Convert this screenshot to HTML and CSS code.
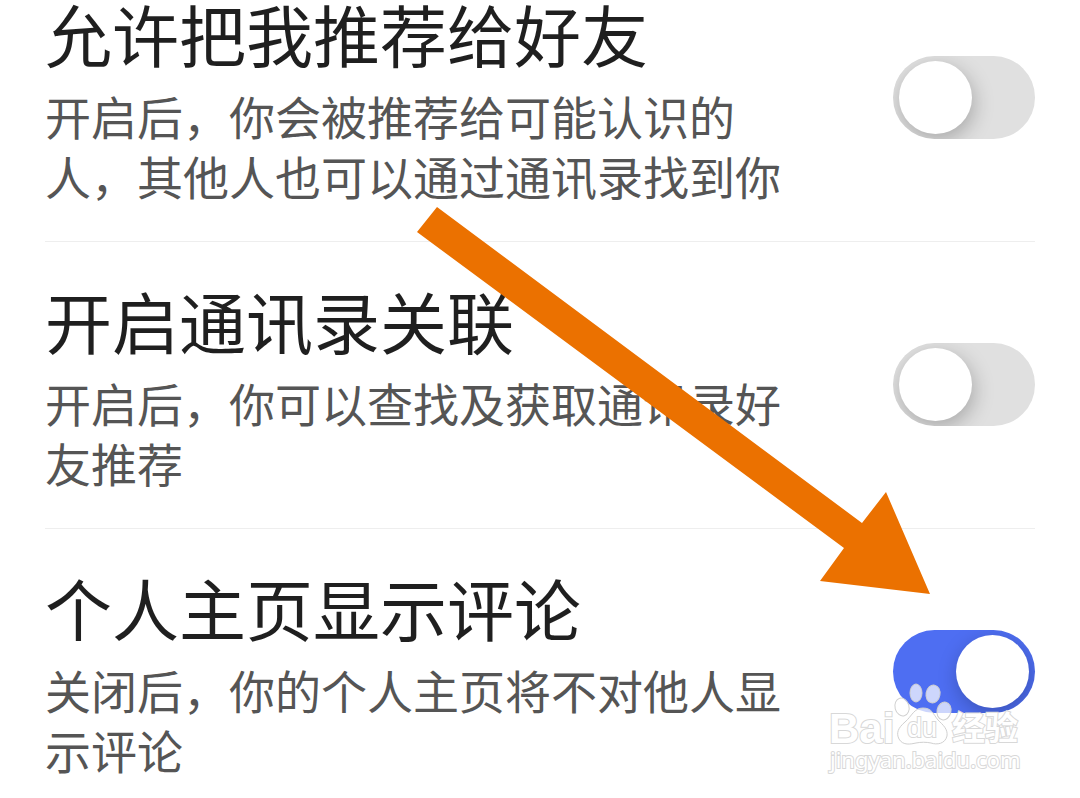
FILE: index.html
```html
<!DOCTYPE html>
<html lang="zh-CN">
<head>
    <meta charset="UTF-8">
    <meta name="viewport" content="width=device-width, initial-scale=1.0">
    <title>隐私设置</title>
    <link rel="stylesheet" href="styles.css">
</head>
<body>
    <main class="settings">
        <div class="item">
            <div class="text">
                <label class="title" for="recommend">允许把我推荐给好友</label>
                <p class="desc">开启后，你会被推荐给可能认识的人，其他人也可以通过通讯录找到你</p>
            </div>
            <input class="switch" type="checkbox" id="recommend">
        </div>
        <div class="item">
            <div class="text">
                <label class="title" for="contacts">开启通讯录关联</label>
                <p class="desc">开启后，你可以查找及获取通讯录好友推荐</p>
            </div>
            <input class="switch" type="checkbox" id="contacts">
        </div>
        <div class="item">
            <div class="text">
                <label class="title" for="comments">个人主页显示评论</label>
                <p class="desc">关闭后，你的个人主页将不对他人显示评论</p>
            </div>
            <input class="switch" type="checkbox" id="comments" checked>
        </div>
        <svg class="arrow" viewBox="0 0 514 388" aria-hidden="true">
            <path d="M20 0 L445 316 L469 285 L513 387 L403 374 L427 341 L0 25 Z"/>
        </svg>
        <svg class="watermark" viewBox="0 0 204 100">
            <text class="bai" x="4" y="63">Bai</text>
            <g class="paw">
                <ellipse cx="91" cy="13" rx="6" ry="9"/>
                <ellipse cx="108" cy="14" rx="7" ry="9" transform="rotate(10 108 14)"/>
                <ellipse cx="77" cy="27" rx="7" ry="9" transform="rotate(-15 77 27)"/>
                <ellipse cx="119" cy="31" rx="7" ry="9" transform="rotate(12 119 31)"/>
                <path d="M98 28 C89 28 87 36 80 42 C73 48 71 53 74 59 C78 66 86 64 91 63 C96 62 101 62 106 63 C112 65 120 64 122 56 C123 49 118 45 113 40 C108 34 107 28 98 28 Z"/>
            </g>
            <text class="du" x="82" y="57">du</text>
            <text class="name" x="127" y="60">经验</text>
            <text class="site" x="5" y="88">jingyan.baidu.com</text>
        </svg>
    </main>
</body>
</html>
```

FILE: styles.css
```css
*{
    box-sizing: border-box;
}
body{
    margin: 0;
    background-color: #fff;
    font-family: "Noto Sans CJK SC", sans-serif;
    color: #1f1f1f;
}
.settings{
    position: relative;
    padding: 0 45px;
}
.item{
    display: flex;
    justify-content: space-between;
    align-items: flex-start;
    padding: 45px 0 36px;
    border-bottom: 1px solid #eee;
}
.item:first-child{
    padding-top: 0;
}
.item:last-of-type{
    padding-bottom: 12px;
    border-bottom: none;
}
.text{
    max-width: 740px;
}
.title{
    display: block;
    margin-bottom: 19px;
    font-size: 67px;
    line-height: 66px;
}
.desc{
    margin: 0;
    font-size: 46px;
    line-height: 60px;
    color: #555;
}
.switch{
    appearance: none;
    flex: none;
    width: 142px;
    height: 83px;
    margin: 56px 0 0;
    padding: 5px 6px;
    border-radius: 42px;
    background-color: #e0e0e0;
    overflow: hidden;
    cursor: pointer;
}
.switch::before{
    content: "";
    display: block;
    width: 73px;
    height: 73px;
    border-radius: 50%;
    background-color: #fff;
    box-shadow: 2px 6px 20px rgba(0, 0, 0, 0.25);
}
.switch:checked{
    background-color: #4e6ef2;
}
.switch:checked::before{
    margin-left: auto;
}
.arrow{
    position: absolute;
    top: 207px;
    left: 417px;
    width: 514px;
    height: 388px;
    fill: #eb7100;
    pointer-events: none;
}
.watermark{
    position: absolute;
    top: 680px;
    right: 51px;
    width: 204px;
    height: 100px;
    fill: #fff;
    stroke: #d8d8d8;
    stroke-width: 2px;
    paint-order: stroke;
    pointer-events: none;
}
.paw{
    fill-opacity: 0.72;
    stroke: #d0d0d0;
    stroke-width: 1px;
    paint-order: normal;
}
.bai{
    font-family: "Liberation Sans", sans-serif;
    font-size: 42px;
    font-weight: bold;
}
.du{
    font-family: "Liberation Sans", sans-serif;
    font-size: 27px;
}
.name{
    font-size: 33px;
    font-weight: bold;
}
.site{
    font-family: "Noto Sans", sans-serif;
    font-size: 22px;
}
```
